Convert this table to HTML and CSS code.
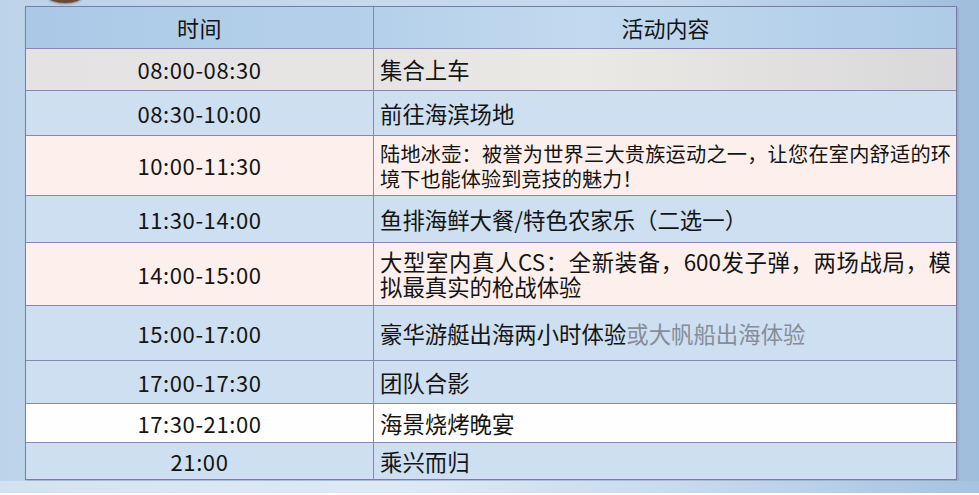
FILE: index.html
```html
<!DOCTYPE html>
<html lang="zh-CN">
<head>
<meta charset="utf-8">
<title>活动行程</title>
<link rel="stylesheet" href="styles.css">
</head>
<body>
<div class="page">
  <div class="logo"></div>
  <div class="schedule">
    <div class="row head h42"><div class="time">时间</div><div class="act center"><p class="txt">活动内容</p></div></div>
    <div class="row gray h42"><div class="time">08:00-08:30</div><div class="act"><p class="txt">集合上车</p></div></div>
    <div class="row blue h45"><div class="time">08:30-10:00</div><div class="act"><p class="txt">前往海滨场地</p></div></div>
    <div class="row pink h60"><div class="time">10:00-11:30</div><div class="act small"><p class="txt">陆地冰壶：被誉为世界三大贵族运动之一，让您在室内舒适的环境下也能体验到竞技的魅力！</p></div></div>
    <div class="row blue h47"><div class="time">11:30-14:00</div><div class="act"><p class="txt">鱼排海鲜大餐/特色农家乐（二选一）</p></div></div>
    <div class="row pink h63"><div class="time">14:00-15:00</div><div class="act"><p class="txt">大型室内真人CS：全新装备，600发子弹，两场战局，模拟最真实的枪战体验</p></div></div>
    <div class="row blue h55"><div class="time">15:00-17:00</div><div class="act"><p class="txt">豪华游艇出海两小时体验<span class="muted">或大帆船出海体验</span></p></div></div>
    <div class="row blue h43"><div class="time">17:00-17:30</div><div class="act"><p class="txt">团队合影</p></div></div>
    <div class="row white h39"><div class="time">17:30-21:00</div><div class="act"><p class="txt">海景烧烤晚宴</p></div></div>
    <div class="row blue h36 last"><div class="time">21:00</div><div class="act"><p class="txt">乘兴而归</p></div></div>
  </div>
  <div class="foot"></div>
</div>
</body>
</html>
```
FILE: styles.css
```css
html, body {
  margin: 0;
  padding: 0;
}
body {
  width: 979px;
  height: 495px;
  overflow: hidden;
  background: #ffffff;
  font-family: "Noto Sans CJK SC", "Noto Sans", sans-serif;
  color: #141414;
}
.page {
  position: relative;
  height: 493px;
  padding: 6px 0 0 25px;
  box-sizing: border-box;
  background: linear-gradient(90deg, #bcd3ea 0%, #c6daee 40%, #c3d8ed 70%, #a9c6e2 92%, #9fbddc 100%);
  display: flex;
  flex-direction: column;
}
.logo {
  position: absolute;
  left: 48px;
  top: -10px;
  width: 34px;
  height: 13px;
  border-radius: 50%;
  background: #6a4a32;
  box-shadow: 0 1px 2px rgba(80, 50, 30, 0.5);
}
.schedule {
  width: 932px;
  box-sizing: border-box;
  border: 1px solid #7f7aa8;
  box-shadow: 1px 1px 2px rgba(90, 100, 140, 0.35);
  display: flex;
  flex-direction: column;
}
.row {
  display: grid;
  grid-template-columns: 348px 1fr;
  border-bottom: 1px solid #8a86b4;
  box-sizing: border-box;
}
.row.last { border-bottom: none; }
.h42 { height: 42px; }
.h45 { height: 45px; }
.h60 { height: 60px; }
.h47 { height: 47px; }
.h63 { height: 63px; }
.h55 { height: 55px; }
.h43 { height: 43px; }
.h39 { height: 39px; }
.h36 { height: 36px; }

.time {
  border-right: 1px solid #8a86b4;
  display: flex;
  align-items: center;
  justify-content: center;
  font-size: 22px;
  letter-spacing: 0.6px;
  line-height: 25px;
}
.act {
  display: flex;
  align-items: center;
  padding: 0 5px 0 6px;
  font-size: 22.4px;
  line-height: 25px;
}
.txt {
  margin: 0;
  width: 100%;
  text-align: justify;
}
.act.center .txt { text-align: center; font-size: 22px; }
.act.small { font-size: 20.2px; line-height: 25px; }
.muted { color: #868d99; }

.head { background: linear-gradient(90deg, #abc9e7 0%, #b6d1ea 40%, #c2daef 60%, #aecbe7 100%); }
.gray { background: linear-gradient(90deg, #e4e2e2 0%, #e7e5e4 40%, #ebe9e5 60%, #d9d8da 100%); }
.blue { background: #cddff1; }
.pink { background: #fdf0ec; }
.white { background: #fefefe; }

.foot {
  flex: 1;
  margin-left: -25px;
  background: linear-gradient(90deg, #d3e2f2 0%, #dfe9f6 40%, #c7daee 70%, #a6c3df 100%);
  margin-top: 1px;
}
```
